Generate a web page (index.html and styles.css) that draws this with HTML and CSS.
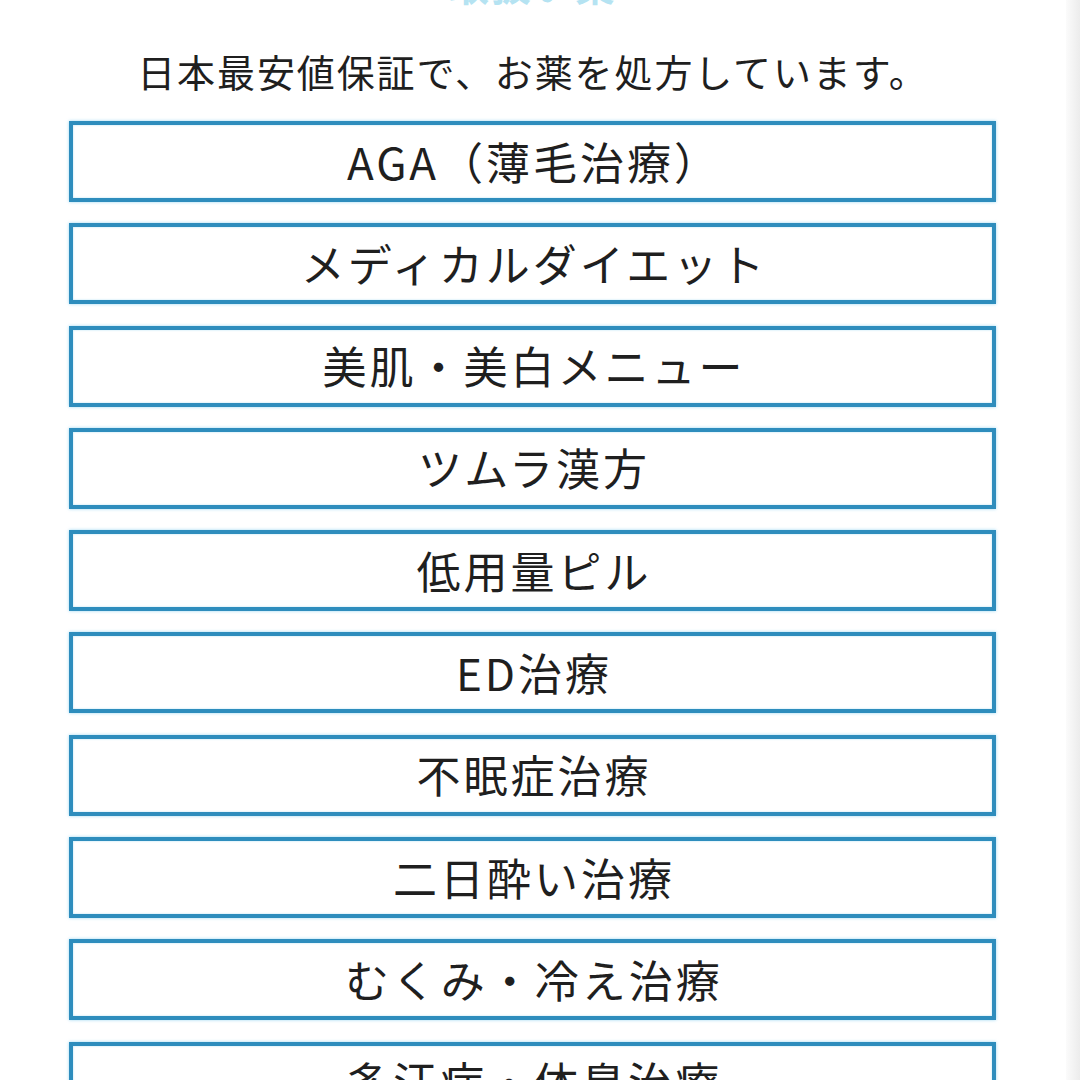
FILE: index.html
```html
<!DOCTYPE html>
<html lang="ja">
<head>
<meta charset="utf-8">
<title>お薬の処方</title>
<link rel="stylesheet" href="styles.css">
</head>
<body>
<div class="page">
  <main class="content">
    <h2 class="heading">取扱い薬</h2>
    <p class="lead">日本最安値保証で、お薬を処方しています。</p>
    <ul class="menu">
      <li class="item">AGA（薄毛治療）</li>
      <li class="item">メディカルダイエット</li>
      <li class="item">美肌・美白メニュー</li>
      <li class="item">ツムラ漢方</li>
      <li class="item">低用量ピル</li>
      <li class="item">ED治療</li>
      <li class="item">不眠症治療</li>
      <li class="item">二日酔い治療</li>
      <li class="item">むくみ・冷え治療</li>
      <li class="item">多汗症・体臭治療</li>
    </ul>
  </main>
  <div class="edge"></div>
</div>
</body>
</html>
```

FILE: styles.css
```css
html, body {
  margin: 0;
  padding: 0;
  background: #ffffff;
}
body {
  width: 1080px;
  height: 1080px;
  overflow: hidden;
  font-family: "Noto Sans CJK JP", "Noto Sans", sans-serif;
  color: #1f1f1f;
}
.page {
  display: flex;
  width: 1080px;
  height: 1080px;
}
.content {
  width: 1066px;
  flex: none;
  display: flex;
  flex-direction: column;
}
.edge {
  flex: 1;
  background: linear-gradient(to right, #fbfbfb, #ececec);
}
.heading {
  margin: -36px 0 0 0;
  height: 40px;
  font-size: 40px;
  line-height: 40px;
  font-weight: 700;
  color: #5cc3e3;
  text-align: center;
  letter-spacing: 2px;
  opacity: 0.45;
}
.lead {
  margin: 42px 0 0 0;
  height: 50px;
  font-size: 38px;
  line-height: 50px;
  letter-spacing: 1.9px;
  text-align: center;
  padding-right: 0;
}
.menu {
  list-style: none;
  margin: 25px 0 0 69px;
  padding: 0;
  width: 927px;
  display: flex;
  flex-direction: column;
  gap: 21.3px;
}
.item {
  box-sizing: border-box;
  height: 81px;
  flex: none;
  border: 4px solid #2e8dbd;
  box-shadow: 0 0 3px rgba(90, 190, 235, 0.6), inset 0 0 2px rgba(90, 190, 235, 0.5);
  display: flex;
  align-items: center;
  justify-content: center;
  font-size: 44px;
  letter-spacing: 3px;
  line-height: 1;
  padding-bottom: 2px;
  padding-left: 3px;
}
```
